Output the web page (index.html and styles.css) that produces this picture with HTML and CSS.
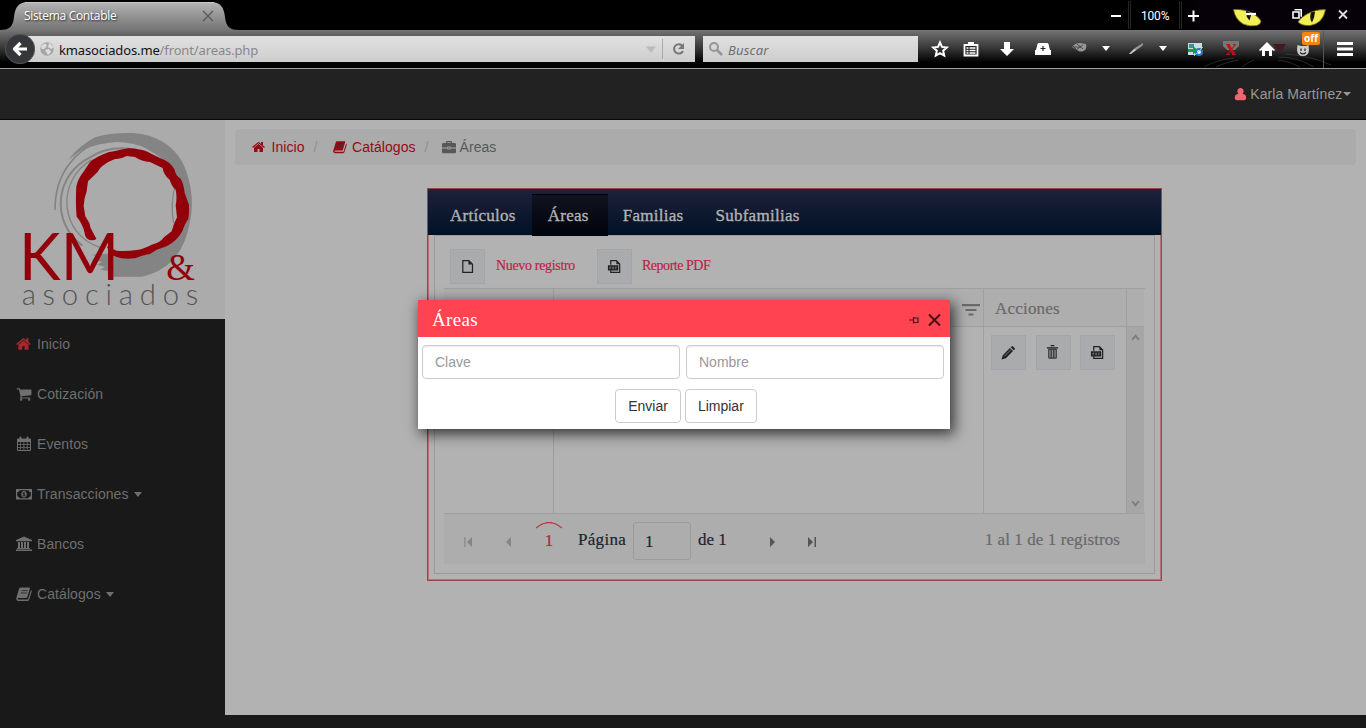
FILE: index.html
```html
<!DOCTYPE html>
<html lang="es">
<head>
<meta charset="utf-8">
<title>Sistema Contable</title>
<link rel="stylesheet" href="styles.css">
</head>
<body>
<svg class="defs">
  <symbol id="home" viewBox="0 0 1792 1792"><path d="M1408 992v480q0 26-19 45t-45 19h-384v-384h-256v384h-384q-26 0-45-19t-19-45v-480q0-1 .5-3t.5-3l575-474 575 474q1 2 1 6zm223-69l-62 74q-8 9-21 11h-3q-13 0-21-7l-692-577-692 577q-12 8-24 7-13-2-21-11l-62-74q-8-10-7-23.5t11-21.5l719-599q32-26 76-26t76 26l244 204v-195q0-14 9-23t23-9h192q14 0 23 9t9 23v408l219 182q10 8 11 21.5t-7 23.5z"/></symbol>
  <symbol id="cart" viewBox="0 0 1792 1792"><path d="M704 1536q0 52-38 90t-90 38-90-38-38-90 38-90 90-38 90 38 38 90zm896 0q0 52-38 90t-90 38-90-38-38-90 38-90 90-38 90 38 38 90zm128-1088v512q0 24-16.5 42.5t-40.5 21.5l-1044 122q13 60 13 70 0 16-24 64h920q26 0 45 19t19 45-19 45-45 19h-1024q-26 0-45-19t-19-45q0-11 8-31.5t16-36 21.5-40 15.5-29.5l-177-823h-204q-26 0-45-19t-19-45 19-45 45-19h256q16 0 28.5 6.5t19.5 15.5 13 24.5 8 26 5.5 29.5 4.5 26h1201q26 0 45 19t19 45z"/></symbol>
  <symbol id="calendar" viewBox="0 0 16 16"><path fill-rule="evenodd" d="M1 3.500q0-1 1-1h1.500V1.500q0-1 1-1t1 1v1h5V1.500q0-1 1-1t1 1v1H14q1 0 1 1V14q0 1-1 1H2q-1 0-1-1zM2 6v2h2.300V6zm3 0v2h2.500V6zm3.300 0v2h2.500V6zM11.600 6v2H14V6zM2 8.800V11h2.300V8.800zm3 0V11h2.500V8.800zm3.300 0V11h2.500V8.800zm3.300 0V11H14V8.800zM2 11.800V14h2.300v-2.200zm3 0V14h2.500v-2.200zm3.300 0V14h2.500v-2.200zm3.300 0V14H14v-2.200z"/></symbol>
  <symbol id="money" viewBox="0 0 16 16"><path fill-rule="evenodd" d="M0 3h16v10.500H0zM3.500 4.200Q3.300 6 1.200 6.200v4Q3.300 10.500 3.500 12.300h9q.2-1.800 2.300-2.100v-4Q12.700 6 12.500 4.200zM8 5c1.700 0 2.700 1.400 2.700 3.200S9.700 11.500 8 11.500 5.300 10 5.300 8.200 6.300 5 8 5zm-.6 1.300-1.100 1 .5.5.6-.4v2h-.9v.9h3v-.9h-.8V6.300z"/></symbol>
  <symbol id="bank" viewBox="0 0 16 16"><path d="M8 .5 16 4v1.200H0V4zM2 6h2v6h1V6h2v6h1V6h2v6h1V6h2v6h1v1H1v-1h1zM0 13.600h16V15H0z"/></symbol>
  <symbol id="book" viewBox="0 0 16 16"><path d="M4.600 1.500h8.600q.9.100.7 1L11.300 11q-.3 1-1.200 1H2.400q-.9.100-.6.900.2.600 1 .6h8.600q.6 0 .8-.7L15 4q1 .6.7 1.500l-2.600 8.300q-.4 1.200-1.700 1.200H2.500Q.7 15 .3 13.300q-.2-.8.100-1.500L3 3q.4-1.500 1.600-1.500z"/><path class="book-lines" d="M5.600 4.600h6M4.900 7h6"/></symbol>
  <symbol id="case" viewBox="0 0 16 16"><path fill-rule="evenodd" d="M4.500 3.500V2q0-1 1-1h5q1 0 1 1v1.500h3q1.500 0 1.500 1.500v3.700H9.700V7.500H6.300v1.200H0V5q0-1.500 1.500-1.500zM6 3.500h4v-1H6zM0 9.600h6.300v1.200h3.400V9.600H16v4q0 1.400-1.500 1.400h-13Q0 15 0 13.600zm7.200-1.200h1.600v1.500H7.200z"/></symbol>
  <symbol id="user" viewBox="0 0 14 16"><path d="M7 1c2.200 0 3.600 1.600 3.600 3.800 0 1.300-.5 2.300-1.300 3 3 .2 4.200 2 4.200 4.700 0 1.500-.9 2.500-2.500 2.500H3C1.400 15 .5 14 .5 12.500c0-2.700 1.200-4.500 4.200-4.700-.8-.7-1.300-1.700-1.300-3C3.400 2.600 4.800 1 7 1z"/></symbol>
  <symbol id="pdf" viewBox="0 0 16 16"><path d="M4 6V1.800h6l3.500 3.500v8.900H4V12" fill="none" stroke="currentColor" stroke-width="1.300"/><path d="M10 1.500v4h4zM1 6.700h11v5.600H1z"/><path d="M3 11V8.500h1.300v1H3M6 8.500v2h1v-2zM9 11V8.500h1.500M9 9.700h1.200" fill="none" stroke="#999" stroke-width=".5"/></symbol>
</svg>

<header class="browser">
  <div class="tabs">
    <svg class="tab-shape" viewBox="0 0 240 30"><defs><linearGradient id="tabfill" x2="0" y2="1"><stop stop-color="#b4b4b4"/><stop offset="1" stop-color="#757575"/></linearGradient></defs><path d="M0 30c9 0 13-3 14-13 1-10 5-15 14-15h183c9 0 13 5 14 15 1 10 5 13 14 13z" fill="url(#tabfill)"/><path d="M25 2.500h189" stroke="#c8c8c8"/></svg>
    <span class="tab-title">Sistema Contable</span>
    <svg class="tab-close" viewBox="0 0 12 12"><path d="m1 1 10 10M11 1 1 11"/></svg>
    <svg class="eyes" viewBox="0 0 132 68"><g stroke="#555" fill="none" opacity=".45"><path d="M0 58q-18 2-30 9M4 60q-15 3-22 7M44 57q20 0 36 10M44 60q12 1 22 7M52 54q25 2 45 11M20 60q-8 3-12 7"/></g><g fill="#f2ee55" stroke="#6b681c" stroke-width=".8"><path d="M-.5 9.500Q11 9 18 13q7 4 9 8 0 3-4 4.500-8 1.500-14-1.500Q1 19-.500 9.500zM91.500 9.500Q82 9 73 14q-7 4-9 8 4 4 12 3.500 13-2 15.500-16z"/></g><path d="M12.500 10.500q-2 5 3 10l2-7zM77 12.500q-2 6 1 10 3-6 3-11z" fill="#15140c"/></svg>
    <div class="window-controls">
      <svg width="258" height="30" viewBox="0 0 258 30"><path d="M3 16h10m67 0h11m-5.500-5.500v11" stroke="#fff" stroke-width="2" fill="none"/><path d="M20.500 1v28m2-28v28M71.500 1v28m2-28v28" stroke="#262626"/><path d="M138 14h10" stroke="#fff" stroke-width="2.200"/><path d="M185 12h6v6h-6zM186.500 9.800h6.700v7" fill="none" stroke="#fff" stroke-width="1.600"/><path d="m231 10.500 8 8m0-8-8 8" stroke="#ddd" stroke-width="1.800"/></svg>
      <span class="zoom-level">100%</span>
    </div>
  </div>
  <div class="toolbar">
    <div class="back"><svg viewBox="0 0 30 30"><circle cx="15" cy="15" r="14.700" fill="#35383a" stroke="#555"/><path d="M22 15H10.500m5-6-6 6 6 6" fill="none" stroke="#fff" stroke-width="3.200" stroke-linejoin="round"/></svg></div>
    <div class="url">
      <svg class="globe" viewBox="0 0 14 14"><circle cx="7" cy="7" r="6.700" fill="#a5a5a5"/><path d="M1 5q2-4 5-3l1 2-3 3-2 0zM9 1q4 2 4 5l-2 1-3-2zM5 8l4-1 2 3-3 3z" fill="#ddd"/></svg>
      <span>kmasociados.me<em>/front/areas.php</em></span>
      <svg class="url-end" viewBox="0 0 52 26"><path d="M3 10.500h10l-5 6.500z" fill="#bbb"/><path d="M19.500 3v20" stroke="#aaa"/><path d="M39.500 10a4.700 4.700 0 1 0 .5 5" fill="none" stroke="#777" stroke-width="2"/><path d="M41 7v6h-6z" fill="#777"/></svg>
    </div>
    <div class="search"><svg viewBox="0 0 14 14"><circle cx="5" cy="5" r="4" fill="none" stroke="#969696" stroke-width="2"/><path d="m8 8 5 5" stroke="#969696" stroke-width="2.500"/></svg><i>Buscar</i></div>
    <div class="tools">
      <svg class="w32" viewBox="-16 -16 32 32"><path d="m0-6.500 2 4.400 4.800.5L3.200 1.700l1 4.800L0 4.100l-4.200 2.400 1-4.800-3.600-3.300 4.800-.5z" fill="none" stroke="#fff" stroke-width="2"/></svg>
      <svg class="w30" viewBox="-15 -16 30 32"><path d="M-6.500-4h13V6.500h-13z" fill="#222" stroke="#fff" stroke-width="1.800"/><path d="M-3-7h6v3h-6z" fill="#fff"/><path d="M-4.500-1h2m1 0h6m-9 2.500h2m1 0h6m-9 2.500h2m1 0h6" stroke="#fff" stroke-width="1.300"/></svg>
      <svg class="w42" viewBox="-21 -16 42 32"><path d="M-3-7h6v7h4L0 7-7 0h4z" fill="#fff"/></svg>
      <svg class="w30" viewBox="-15 -16 30 32"><path d="M-4-6h8q1 0 1.500 1L7 1h1v5H-8V1h1l1.500-6q.5-1 1.500-1z" fill="#fff"/><path d="M0-3v5m-2.500-2.500h5" stroke="#222" stroke-width="1.200"/></svg>
      <svg class="w42" viewBox="-21 -16 42 32"><path d="M-7-2q3-4 8-4l6 1q1 4-1 6-4 3-8 0z" fill="#969696"/><path d="m-6-2 8 0M-3 1l7-5M-2-5l6 5M-7-4l4 4" stroke="#333" stroke-width=".7"/></svg>
      <svg class="w12" viewBox="-6 -16 12 32"><path d="M-4-3h8L0 2z" fill="#fff"/></svg>
      <svg class="w46" viewBox="-23 -16 46 32"><path d="m-6 5 6-6 8-5q1 1-1 3L0 2z" fill="#999"/><path d="m-6 5 5-5 2 1-5 4z" fill="#ccc"/></svg>
      <svg class="w10" viewBox="-5 -16 10 32"><path d="M-4-3h8L0 2z" fill="#fff"/></svg>
      <svg class="w54" viewBox="-27 -16 54 32"><path d="M-7-6H7V6H-7z" fill="#c9dde4"/><path d="M-6-5H-1V-1h-5z" fill="#438b9c"/><path d="M-7 0h5v-3l5 4.500-5 4V3h-5z" fill="#199c48"/><circle cx="4" cy="3" r="3" fill="#dff" stroke="#2277cc" stroke-width="2"/><path d="M-1 7 8-2" stroke="#eab525"/></svg>
      <svg class="w18" viewBox="-9 -16 18 32"><path d="M-8-8H8v5l-4 4h-8l-4-4z" fill="#777"/><path d="M-5-4.500h4M2-4.500h3M4-4-3 5m-2 .5h4m2 0h4" stroke="#b71515" stroke-width="1.200" fill="none"/><path d="m-3-4 6 9" stroke="#b71515" stroke-width="3"/></svg>
      <svg class="w54" viewBox="-27 -16 54 32"><path d="M6-5h13l-5 8-5-3z" fill="#421b1d"/><path d="M-8 1 0-7 8 1 7 2 5 1v6H2V2h-4v5h-3V1l-2 1z" fill="#fff"/></svg>
      <div class="smiley w18"><svg class="w18" viewBox="-9 -16 18 32"><path d="m-5.500-4 3 1h5l3-1 .5 5q-.5 6-6 6t-6-6z" fill="#ccc"/><path d="M-2-.5V2m4-2.500V2M-3 3.500q3 3 6 0" fill="none" stroke="#222" stroke-width="1.200"/></svg><b>off</b></div>
      <svg class="burger" viewBox="-33 -16 54 32"><path d="M-21.500-18v37" stroke="#555"/><path d="M-8-5.500H8M-8 0H8M-8 5.500H8" stroke="#fff" stroke-width="3"/></svg>
    </div>
  </div>
</header>

<nav class="topbar"><svg class="user-icon"><use href="#user"/></svg><span>Karla Martínez</span><i class="caret"></i></nav>

<div class="page">
  <aside class="sidebar">
    <svg class="logo" viewBox="0 6 675 597">
      <path class="brush" d="M205 125Q235 85 285 58 330 43 400 45 450 48 490 73 545 105 565 180 585 255 568 320 555 385 520 425 480 465 425 476H330L322 467 330 460 300 455 315 447 292 440 305 432 274 424 300 418 275 410 350 405 400 418 500 370 545 300 545 220 518 150Q490 120 440 92 400 72 350 72 295 75 245 97z"/>
      <g class="strokes"><path stroke-width="5" d="M165 276C165 170 220 100 305 66"/><path stroke-width="6" d="M247 383C150 310 165 170 270 118Q320 85 390 92"/><path stroke-width="4" d="M300 388C180 350 165 190 275 125M526 200Q510 260 521 315"/></g>
      <path class="ring" d="M289 362Q285 368 268 366 258 362 256 354L250 330 240 310 230 296Q226 260 229 205 235 180 250 162L270 132Q285 118 325 103L345 99Q365 95 385 91 400 89 415 94 440 98 455 108L480 120Q510 130 524 155 526 172 542 182 552 200 554 225 561 245 567 260 568 285 565 303 555 315 547 340 530 370 500 385L470 395 450 408Q425 412 405 421 370 424 350 417L332 409 320 385 350 398Q380 400 410 396 430 393 455 380 480 375 492 358L515 340Q522 315 531 298L527 262Q532 240 527 215 515 205 509 185 490 170 488 150 470 142 450 132 425 130 405 117L380 114Q360 125 345 123 325 130 310 142 300 148 292 163L264 190 260 220Q252 240 251 265L256 295 268 315Q271 332 277 340z"/>
      <g class="logo-red"><text x="57" y="486" font-size="195" textLength="300" lengthAdjust="spacingAndGlyphs">KM</text><text class="amp" x="499" y="486" font-size="112" textLength="86" lengthAdjust="spacingAndGlyphs">&amp;</text></g>
      <text class="logo-name" x="65" y="560" font-size="88" textLength="530" lengthAdjust="spacing">asociados</text>
    </svg>
    <ul class="menu">
      <li class="current"><svg><use href="#home"/></svg>Inicio</li>
      <li><svg><use href="#cart"/></svg>Cotización</li>
      <li><svg><use href="#calendar"/></svg>Eventos</li>
      <li><svg><use href="#money"/></svg>Transacciones<i class="caret"></i></li>
      <li><svg><use href="#bank"/></svg>Bancos</li>
      <li><svg><use href="#book"/></svg>Catálogos<i class="caret"></i></li>
    </ul>
  </aside>
  <main class="content">
    <div class="breadcrumb">
      <a><svg><use href="#home"/></svg>Inicio</a><span class="slash">/</span>
      <a><svg><use href="#book"/></svg>Catálogos</a><span class="slash">/</span>
      <span class="here"><svg><use href="#case"/></svg>Áreas</span>
    </div>
    <section class="panel">
      <div class="panel-tabs"><span>Artículos</span><span class="active">Áreas</span><span>Familias</span><span>Subfamilias</span></div>
      <div class="panel-body">
        <div class="actions">
          <span class="tile"><svg viewBox="0 0 16 16"><path d="M3 1.700h6.500l3.800 3.800v8.800H3z" fill="none" stroke="currentColor" stroke-width="1.300"/><path d="M9 1.500v4.300h4.300z"/></svg></span><span class="label first">Nuevo registro</span>
          <span class="tile"><svg><use href="#pdf"/></svg></span><span class="label">Reporte PDF</span>
        </div>
        <div class="grid">
          <div class="cell head"></div>
          <div class="cell head filter"><svg viewBox="0 0 18 12"><path d="M0 1.200h18M3.500 6h11M6.500 10.500h5" stroke="#6a6a6a" stroke-width="2.200"/></svg></div>
          <div class="cell head">Acciones</div><div class="head"></div>
          <div class="cell"></div><div class="cell"></div>
          <div class="cell row-actions">
            <span class="tile"><svg viewBox="0 0 16 16"><path d="m.5 15.500 1.400-4.700L9.500 3.200 12.800 6.500 5.200 14.100zM10.300 2.500l1-1q.7-.7 1.500 0l1.700 1.700q.7.700 0 1.500l-.9 1z"/><path d="m3.500 12 7.500-7.500" stroke="#999" stroke-width=".8"/></svg></span>
            <span class="tile"><svg viewBox="0 0 16 16"><path d="M6 .5h4M2 3h12" stroke="currentColor" stroke-width="1.400"/><path d="M4 4.500h8V14H4z" fill="#888" stroke="currentColor"/><path d="M6.600 5v9M9.400 5v9" stroke="currentColor"/></svg></span>
            <span class="tile"><svg><use href="#pdf"/></svg></span>
          </div>
          <div class="scroll"><svg viewBox="0 0 8 6"><path d="m1 5 3-3.500L7 5"/></svg><svg viewBox="0 0 8 6"><path d="m1 1 3 3.500L7 1"/></svg></div>
        </div>
        <div class="pager">
          <svg class="prev" viewBox="0 0 50 12"><path d="M.3 1h1.200v10H.3zM8 1v10L3 6zM47 1v10l-5-5z"/></svg>
          <span class="page-now"><svg viewBox="0 0 26 7"><path d="M0 6q13-11 26 0" fill="none" stroke="#b93842" stroke-width="1.300"/></svg>1</span>
          <span class="page-word">Página</span><span class="page-input">1</span><span class="of">de 1</span>
          <svg class="next" viewBox="0 0 50 12"><path d="M2 1v10l5-5zM40 1v10l5-5zM46.500 1H48v10h-1.500z"/></svg>
          <span class="total">1 al 1 de 1 registros</span>
        </div>
      </div>
    </section>
  </main>
</div>

<section class="dialog">
  <div class="dialog-title"><span>Áreas</span><svg viewBox="0 0 32 14"><path d="M0 7h4M4.500 4v6.500M5 5h4v4.500H5" fill="none" stroke="#4b1015" stroke-width="1.200"/><path d="m20 1.500 11 11m0-11-11 11" stroke="#4a0f14" stroke-width="2"/></svg></div>
  <div class="fields"><input placeholder="Clave"><input placeholder="Nombre"></div>
  <div class="buttons"><button>Enviar</button><button>Limpiar</button></div>
</section>
</body>
</html>
```
FILE: styles.css
```css
* { box-sizing: border-box; }
body { margin: 0; width: 1366px; height: 728px; overflow: hidden; background: #191919; font: 14px/20px "Liberation Sans", Arial, sans-serif; position: relative; }
svg { fill: currentColor; display: block; flex: none; }
.defs { position: absolute; width: 0; height: 0; }

/* Browser frame */
.browser { height: 69px; background: #000; border-bottom: 1px solid #a0a0a0; font-family: "Noto Sans", "Open Sans", sans-serif; }
.tabs { height: 30px; position: relative; display: flex; align-items: center; background: linear-gradient(90deg, #000 1180px, #060108 1200px); }
.tab-shape { position: absolute; left: 0; top: 0; width: 240px; height: 30px; }
.tab-title { position: relative; margin-left: 24px; width: 178px; padding-top: 2px; color: #fff; font: 12px/16px "Open Sans", sans-serif; letter-spacing: -.32px; text-shadow: 1px 1px 2px #222; white-space: nowrap; }
.tab-close { position: relative; width: 12px; height: 12px; stroke: #555; stroke-width: 1.2; margin-top: 2px; }
.eyes { position: absolute; left: 1234px; top: 0; width: 132px; height: 68px; overflow: visible; z-index: 1; }
.window-controls { position: relative; margin-left: auto; width: 258px; height: 30px; z-index: 2; }
.zoom-level { position: absolute; left: 33px; top: 8px; font: 12px/16px Roboto, sans-serif; letter-spacing: -.2px; color: #fff; }
.toolbar { height: 38px; display: flex; align-items: center; background: linear-gradient(#747474, #3a3a3a 45%, #000 85%); }
.back { width: 36px; height: 30px; padding-left: 5px; position: relative; margin-right: -8px; z-index: 1; }
.back svg { width: 30px; height: 30px; }
.url { width: 667px; height: 26px; display: flex; align-items: center; background: linear-gradient(#e1e1e1, #cdcdcd); padding-left: 12px; color: #111; font-size: 13px; letter-spacing: -.13px; }
.url span { padding-top: 2px; }
.globe { width: 14px; height: 14px; margin-right: 5px; }
.url em { font-style: normal; color: #888; }
.url-end { width: 52px; height: 26px; margin-left: auto; }
.search { width: 215px; height: 26px; margin-left: 8px; padding-left: 6px; display: flex; align-items: center; gap: 5px; background: linear-gradient(#e1e1e1, #cdcdcd); color: #707070; font-size: 13px; letter-spacing: .2px; }
.search i { padding-top: 2px; }
.search svg { width: 14px; height: 14px; }
.tools { margin-left: 6px; display: flex; align-items: center; height: 38px; position: relative; z-index: 2; }
.tools svg { height: 32px; overflow: visible; }
.w10 { width: 10px; } .w12 { width: 12px; } .w18 { width: 18px; } .w30 { width: 30px; } .w32 { width: 32px; } .w42 { width: 42px; } .w46 { width: 46px; } .w54 { width: 54px; }
.burger { width: 54px; }
.smiley { position: relative; }
.smiley b { position: absolute; left: 8px; top: -1px; width: 18px; height: 13px; border-radius: 2px; background: #f78508; color: #fff; font: bold 10px/12px "Open Sans", sans-serif; text-align: center; }

/* Application */
.topbar { height: 51px; background: #222; border-bottom: 1px solid #080808; display: flex; justify-content: flex-end; align-items: center; padding-right: 15px; color: #989898; letter-spacing: .08px; }
.user-icon { width: 13px; height: 14px; color: #ed6670; margin-right: 3px; }
.topbar span { margin-right: .6px; }
.caret { width: 0; height: 0; border: 4px solid transparent; border-top-color: currentColor; border-bottom: 0; }
.page { display: flex; height: 595px; }
.sidebar { width: 225px; background: #191919; }
.logo { width: 225px; height: 199px; background: #ababab; }
.brush { fill: #858484; }
.strokes { fill: none; stroke: #858484; }
.ring, .logo-red { fill: #92000a; }
.logo-red { font-family: Lato, sans-serif; }
.amp { font-family: "Liberation Serif", serif; }
.logo-name { font-family: Lato, sans-serif; font-weight: 300; fill: #555; }
.menu { list-style: none; margin: 0; padding: 0; color: #6f6f6f; letter-spacing: .08px; }
.menu li { height: 50px; display: flex; align-items: center; padding-left: 16px; }
.menu svg { width: 16px; height: 16px; margin-right: 5px; }
.menu .current svg { color: #a6282f; }
.menu .caret { margin-left: 5px; border-left-width: 4.500px; border-right-width: 4.500px; border-top-width: 5px; }
.book-lines { stroke: #333; fill: none; stroke-width: 1; }
.content { flex: 1; background: #b2b2b2; padding: 9px 10px; }
.breadcrumb { height: 36px; border-radius: 4px; background: #ababab; display: flex; align-items: center; padding-left: 17px; color: #575757; letter-spacing: .06px; }
.breadcrumb a, .here { display: flex; align-items: center; }
.breadcrumb a { color: #960a14; }
.breadcrumb svg { width: 14px; height: 14px; margin-right: 5.5px; }
.breadcrumb .here svg { margin-right: 4px; }
.slash { color: #909090; margin: 0 15px 0 9px; }
.slash + .here { margin-left: -2px; }

.panel { width: 735px; height: 393px; margin: 23px 0 0 192px; border: 1px solid #a0424b; box-shadow: inset 0 0 0 1px #b97078; font-family: "Liberation Serif", serif; font-size: 17px; }
.panel-tabs { height: 46px; background: linear-gradient(#1e2139, #001126); display: flex; align-items: flex-end; padding-left: 6px; color: #b2b2b2; }
.panel-tabs span { height: 41px; display: flex; align-items: center; padding: 2px 16px 0; letter-spacing: .27px; -webkit-text-stroke: .35px; }
.panel-tabs .active { background: linear-gradient(#111320, #00040c); height: 42px; margin-bottom: -1px; position: relative; border-top: 1px solid #000; width: 76px; margin-right: -1px; padding: 1px 0 0 16px; }
.panel-body { width: 721px; height: 339px; margin-left: 6px; border: 1px solid #9b9b9b; padding: 9px; }
.actions { height: 43px; display: flex; align-items: center; padding-left: 6px; color: #b91f48; font-size: 14px; }
.tile { width: 35px; height: 35px; background: #a9abad; border: 1px solid #a3a6a9; display: flex; align-items: center; justify-content: center; color: #222; }
.tile svg { width: 15px; height: 15px; margin-left: -1px; }
.label { margin-left: 10px; padding-bottom: 2px; letter-spacing: -.48px; -webkit-text-stroke: .15px; }
.label.first { width: 101px; margin-left: 11px; letter-spacing: -.33px; }
.grid { height: 226px; display: grid; grid-template: 38px 186px / 110px 430px 143px 17px; border: 1px solid #9f9f9f; border-width: 1px 0; }
.head { border-bottom: 1px solid #9f9f9f; background: #aeaeae; }
.cell { border-right: 1px solid #9f9f9f; }
.cell.head { padding: 10px 0 0 11px; color: #696969; letter-spacing: .2px; -webkit-text-stroke: .2px; }
.cell.head.filter { display: flex; justify-content: flex-end; padding: 15px 3px 0; }
.filter svg { width: 18px; height: 12px; }
.row-actions { display: flex; gap: 9.5px; padding: 8px 0 0 7px; }
.scroll { background: #a6a6a6; display: flex; flex-direction: column; justify-content: space-between; align-items: center; padding: 7px 0 6px; }
.scroll svg { width: 9px; height: 7px; fill: none; stroke: #7d7d7d; stroke-width: 1.700; }
.pager { height: 50px; background: #adadad; display: flex; align-items: center; padding-left: 20px; color: #1d2230; -webkit-text-stroke: .2px; }
.pager > span { flex: none; }
.prev { width: 50px; height: 12px; margin: 6px 22px 0 0; color: #858585; }
.page-now { width: 26px; height: 34px; color: #b52533; text-align: center; line-height: 26px; }
.page-now svg { width: 26px; height: 7px; margin-bottom: -1px; }
.page-word { width: 55px; margin-left: 16px; letter-spacing: .3px; padding-top: 1px; }
.page-input { width: 58px; height: 38px; border: 1px solid #9b9b9b; border-radius: 3px; padding: 9px 0 0 11px; margin-top: 3px; }
.of { width: 70px; margin-left: 7px; padding-top: 1px; }
.next { width: 50px; height: 12px; margin-top: 6px; color: #555; }
.total { margin-left: auto; padding: 1px 25px 0 0; color: #696969; letter-spacing: .08px; }

/* Floating form */
.dialog { position: absolute; left: 418px; top: 300px; width: 532px; height: 129px; background: #fff; box-shadow: 3px 4px 13px 1px rgba(0,0,0,.7); z-index: 3; }
.dialog-title { height: 37px; background: #ff4350; color: #fff; font: 19px/24px "Liberation Serif", serif; display: flex; align-items: center; padding: 3px 9px 0 14px; letter-spacing: .35px; }
.dialog-title svg { width: 32px; height: 14px; margin-left: auto; }
.fields { display: flex; gap: 6px; padding: 8px 6px 0 4px; }
.fields input { flex: 1; min-width: 0; height: 34px; border: 1px solid #ccc; border-radius: 4px; padding: 6px 12px; font: 14px "Liberation Sans", Arial, sans-serif; box-shadow: inset 0 1px 1px rgba(0,0,0,.08); }
.fields input::placeholder { color: #999; }
.buttons { display: flex; justify-content: center; gap: 4px; padding: 10px 0 0 4px; }
.buttons button { height: 34px; padding: 0 12px; border: 1px solid #ccc; border-radius: 4px; background: #fff; color: #333; font: 14px "Liberation Sans", Arial, sans-serif; }
```
